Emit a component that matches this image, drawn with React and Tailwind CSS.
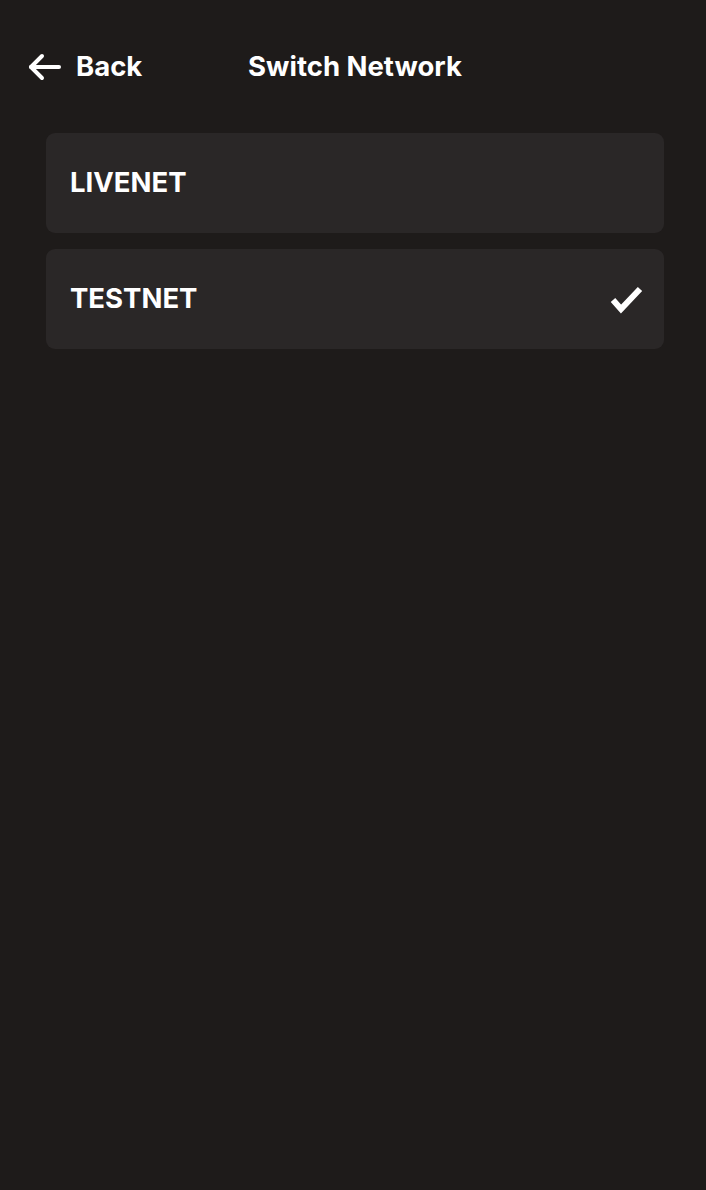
import React, { useState } from 'react';

const networks = ['LIVENET', 'TESTNET'];

const App = () => {
    const [selected, setSelected] = useState('TESTNET');

    return (
        <div className="min-h-[1190px] w-full bg-[#1e1b1a] text-white" style={{ fontFamily: 'Inter, "Noto Sans", sans-serif' }}>
            {/* header */}
            <div className="relative flex h-[133px] items-center justify-center">
                <button className="absolute inset-y-0 left-[28px] flex items-center gap-[15px] text-[27.5px] font-bold leading-none">
                    <svg width="33" height="28" viewBox="0 0 33 28" fill="none" stroke="white" strokeWidth="4" strokeLinecap="round" strokeLinejoin="round">
                        <path d="M31 14H3" />
                        <path d="M14 3L3 14L14 25" />
                    </svg>
                    <span>Back</span>
                </button>
                <h1 className="ml-[4px] text-[27.5px] font-bold leading-none">Switch Network</h1>
            </div>

            {/* list */}
            <div className="flex flex-col gap-4 pl-[46px] pr-[42px]">
                {networks.map((n) => (
                    <button
                        key={n}
                        onClick={() => setSelected(n)}
                        className="flex h-[100px] items-center justify-between rounded-[9px] bg-[#2a2727] pl-[24px] pr-[21px] text-left"
                    >
                        <span className="text-[27.5px] font-bold leading-none">{n}</span>
                        {selected === n && (
                            <svg width="34" height="30" viewBox="0 0 34 30" fill="none" stroke="white" strokeWidth="6" strokeLinejoin="miter" className="mt-[2px]">
                                <path d="M4 15L12 24L31 4" />
                            </svg>
                        )}
                    </button>
                ))}
            </div>
        </div>
    );
};

export default App;
